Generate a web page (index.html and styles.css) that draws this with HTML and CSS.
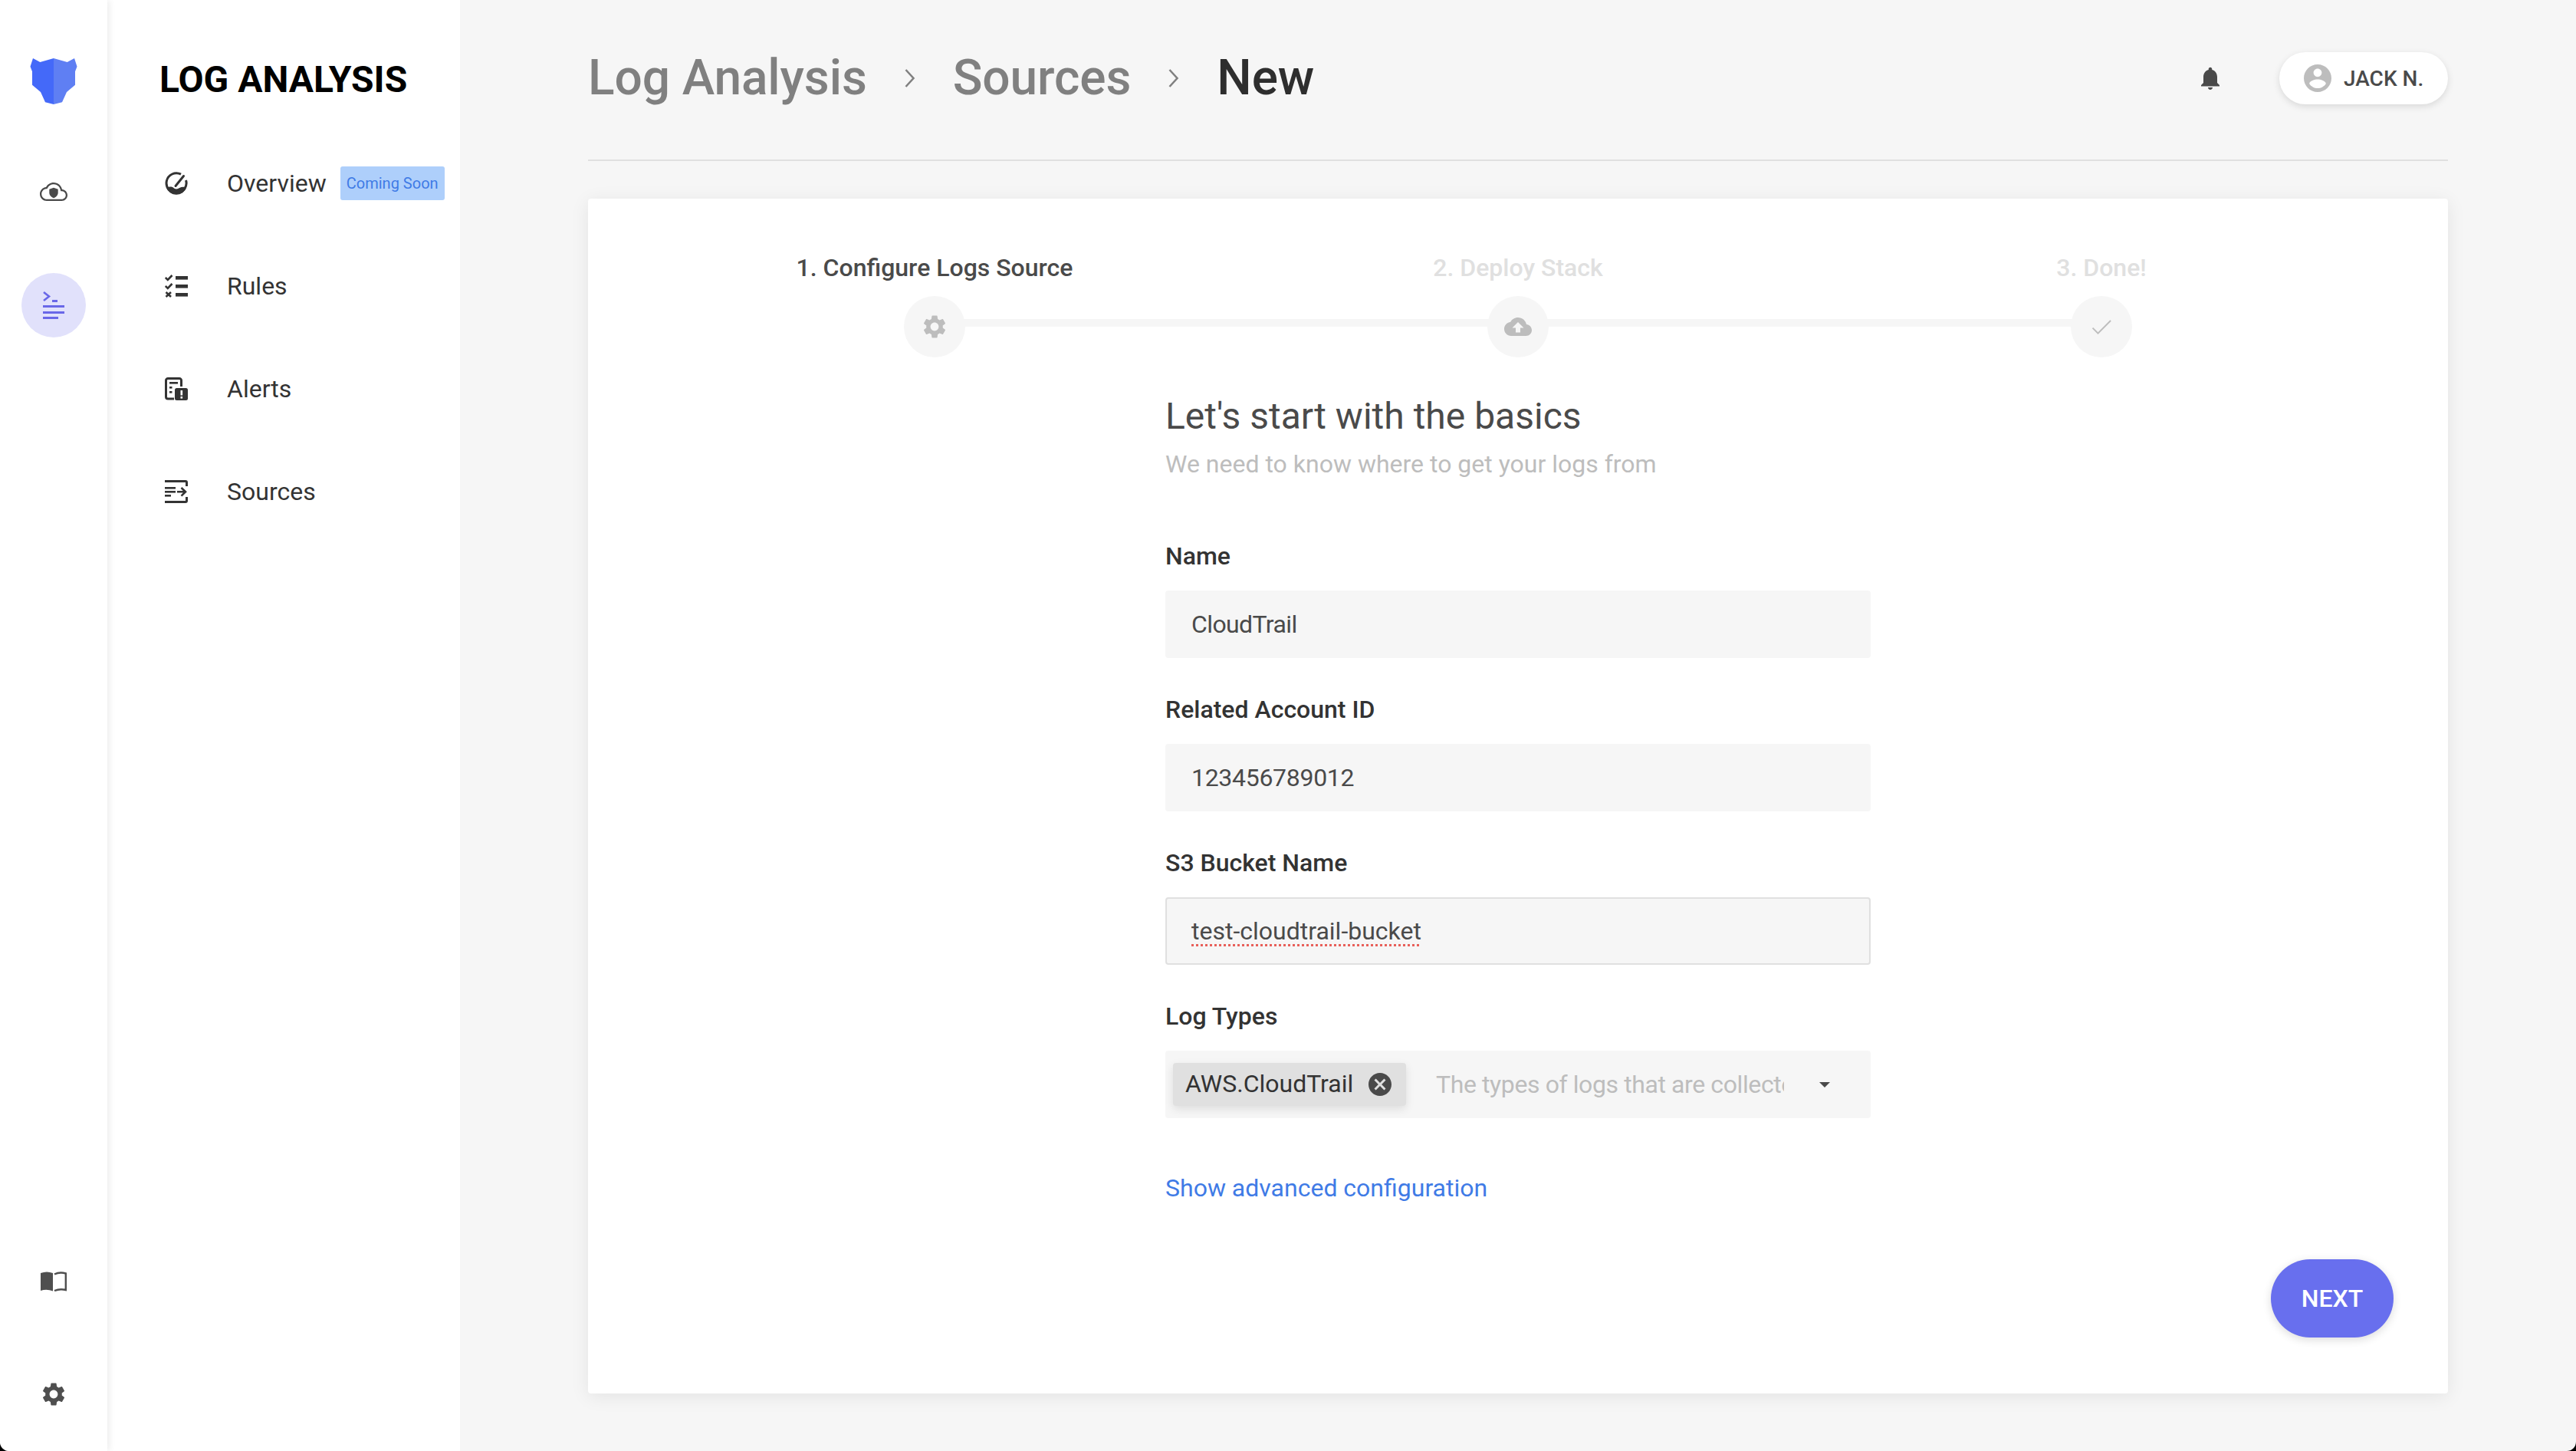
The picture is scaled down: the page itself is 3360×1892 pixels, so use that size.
FILE: index.html
```html
<!DOCTYPE html>
<html lang="en">
<head>
<meta charset="utf-8">
<title>Log Analysis - New Source</title>
<link rel="stylesheet" href="styles.css">
</head>
<body>
<div class="app">
  <aside class="rail">
    <div class="rail-btn rail-logo">
      <svg class="logo" viewBox="0 0 82 60"><path fill="#4469f9" d="M41 0 L23.3 5 L14 0 L10.500 10.700 L13 17.300 L13 34.700 L24 44 L30 57.300 L41 60 Z"/><path fill="#5f7ff3" d="M41 0 L58.700 5 L68 0 L71.500 10.700 L69 17.300 L69 34.700 L58 44 L52 57.300 L41 60 Z"/></svg>
    </div>
    <div class="rail-btn rail-cloud">
      <svg class="i36" viewBox="0 0 24 24"><path fill="#4a4a4a" d="M19.350 10.040C18.670 6.590 15.640 4 12 4 9.110 4 6.600 5.640 5.350 8.040 2.340 8.360 0 10.910 0 14c0 3.310 2.690 6 6 6h13c2.760 0 5-2.240 5-5 0-2.640-2.050-4.780-4.650-4.960zM19 18.500H6c-2.480 0-4.500-2.020-4.500-4.500 0-2.300 1.720-4.220 4-4.460l.8-.08.37-.71C7.820 6.500 9.800 5.500 12 5.500c2.860 0 5.340 2.030 5.900 4.830l.22 1.130 1.150.08c1.800.12 3.230 1.640 3.230 3.460 0 1.930-1.570 3.500-3.500 3.500z"/><path fill="#4a4a4a" d="M12 8.500l3.800 1.400v3c0 2.200-1.600 3.800-3.800 4.600-2.200-.8-3.800-2.400-3.800-4.600v-3z"/></svg>
    </div>
    <div class="rail-btn rail-active">
      <svg class="i-logs" viewBox="0 0 28 37"><path fill="none" stroke="#6967e8" stroke-width="2.600" d="M1 1l7 5.500-7 5.500"/><rect fill="#6967e8" x="12" y="11" width="7" height="3"/><rect fill="#6967e8" y="18" width="28" height="3"/><rect fill="#6967e8" y="26" width="28" height="3"/><rect fill="#6967e8" y="33" width="20" height="3"/></svg>
    </div>
    <div class="rail-spacer"></div>
    <div class="rail-btn rail-book">
      <svg class="i-book" viewBox="0 0 34 26"><path fill="#4f4f4f" d="M0 2 Q8 -1 16 2 V25.500 Q8 22.500 0 25 Z"/><path fill="none" stroke="#4f4f4f" stroke-width="2.400" d="M18 3.500 Q25 0 32.800 2.500 V24 Q25 22 18 25"/></svg>
    </div>
    <div class="rail-btn">
      <svg class="i36" viewBox="0 0 24 24"><path fill="#4f4f4f" d="M19.140 12.940c.04-.3.060-.61.060-.94 0-.32-.02-.64-.07-.94l2.030-1.580c.18-.14.23-.41.120-.61l-1.920-3.320c-.12-.22-.37-.29-.59-.22l-2.390.96c-.5-.38-1.030-.7-1.620-.94L14.400 2.810c-.04-.24-.24-.41-.48-.41h-3.840c-.24 0-.43.17-.47.41L9.250 5.350c-.59.24-1.130.57-1.620.94l-2.390-.96c-.22-.08-.47 0-.59.22L2.740 8.870c-.12.21-.08.47.120.61l2.030 1.580c-.05.3-.09.63-.09.94s.02.64.07.94l-2.030 1.580c-.18.14-.23.41-.12.61l1.920 3.320c.12.22.37.29.59.22l2.390-.96c.5.38 1.030.7 1.620.94l.36 2.540c.05.24.24.41.48.41h3.840c.24 0 .44-.17.47-.41l.36-2.540c.59-.24 1.130-.56 1.620-.94l2.390.96c.22.08.47 0 .59-.22l1.920-3.320c.12-.22.07-.47-.12-.61l-2.010-1.580zM12 15.600c-1.980 0-3.600-1.620-3.600-3.600s1.620-3.600 3.600-3.600 3.600 1.620 3.600 3.600-1.620 3.600-3.600 3.600z"/></svg>
    </div>
  </aside>

  <nav class="nav">
    <h2 class="nav-title">LOG ANALYSIS</h2>
    <div class="nav-item">
      <svg class="i30" viewBox="0 0 30 30"><path fill="none" stroke="#333" stroke-width="3" d="M21 3.200A13 13 0 1 0 27.500 11"/><path fill="#333" d="M1.800 20.500C6 19 10 19 12 21.500c2.500 1.500 5 1 7-.5 3-1.500 6-1.500 9.200-.5A14 14 0 0 1 1.800 20.500z"/><path stroke="#333" stroke-width="3" stroke-linecap="round" d="M14 18.500L24.500 5.500"/></svg>
      <span class="nav-label">Overview</span>
      <span class="badge">Coming Soon</span>
    </div>
    <div class="nav-item">
      <svg class="i30" viewBox="0 0 30 30"><path fill="none" stroke="#333" stroke-width="2.600" d="M.8 4l3 3L9.500 1M.8 15l3 3 5.700-6M1.500 23l6.500 6M8 23l-6.500 6"/><rect fill="#333" x="14" y="2" width="16" height="4.600"/><rect fill="#333" x="14" y="13" width="16" height="4.600"/><rect fill="#333" x="14" y="24" width="16" height="4.600"/></svg>
      <span class="nav-label">Rules</span>
    </div>
    <div class="nav-item">
      <svg class="i30" viewBox="0 0 30 30"><path fill="none" stroke="#333" stroke-width="3" d="M12 28H4a2.500 2.500 0 0 1-2.500-2.500V4A2.500 2.500 0 0 1 4 1.500h15A2.500 2.500 0 0 1 21.500 4v8"/><rect fill="#333" x="6" y="6" width="11" height="2.600"/><rect fill="#333" x="6" y="12" width="3.500" height="2.600"/><rect fill="#333" x="6" y="18" width="3.500" height="2.600"/><rect fill="#333" x="13" y="14" width="17" height="16" rx="2.500"/><rect fill="#fff" x="20.500" y="17" width="2.600" height="6.500"/><rect fill="#fff" x="20.500" y="25" width="2.600" height="2.600"/></svg>
      <span class="nav-label">Alerts</span>
    </div>
    <div class="nav-item">
      <svg class="i30" viewBox="0 0 30 30"><path fill="none" stroke="#333" stroke-width="3" d="M0 1.500h27a1.500 1.500 0 0 1 1.500 1.500v5M0 28.500h27a1.500 1.500 0 0 0 1.500-1.500v-5"/><rect fill="#333" y="9" width="14" height="2.600"/><rect fill="#333" y="14" width="14" height="2.600"/><rect fill="#333" y="19" width="8" height="2.600"/><path fill="none" stroke="#333" stroke-width="2.600" d="M16 15.300h11M21.500 10l5.500 5.300-5.500 5.300"/></svg>
      <span class="nav-label">Sources</span>
    </div>
  </nav>

  <main class="main">
    <header class="topbar">
      <div class="crumbs">
        <span class="crumb">Log Analysis</span>
        <svg class="chev" viewBox="0 0 14 24"><path fill="none" stroke="#808080" stroke-width="2.600" d="M1.500 1l10 11-10 11"/></svg>
        <span class="crumb">Sources</span>
        <svg class="chev" viewBox="0 0 14 24"><path fill="none" stroke="#808080" stroke-width="2.600" d="M1.500 1l10 11-10 11"/></svg>
        <span class="crumb crumb-current">New</span>
      </div>
      <div class="top-right">
        <svg class="bell" viewBox="0 0 24 24"><path fill="#4a4a4a" d="M12 22c1.100 0 2-.9 2-2h-4c0 1.100.89 2 2 2zm6-6v-5c0-3.070-1.640-5.640-4.500-6.320V4c0-.83-.67-1.500-1.500-1.500s-1.500.67-1.500 1.500v.68C7.630 5.360 6 7.920 6 11v5l-2 2v1h16v-1l-2-2z"/></svg>
        <div class="user">
          <svg class="avatar" viewBox="2 2 20 20"><path fill="#bdbdbd" d="M12 2C6.480 2 2 6.480 2 12s4.480 10 10 10 10-4.480 10-10S17.520 2 12 2zm0 3c1.660 0 3 1.340 3 3s-1.340 3-3 3-3-1.340-3-3 1.340-3 3-3zm0 14.200c-2.500 0-4.710-1.280-6-3.220.03-1.990 4-3.080 6-3.080 1.990 0 5.970 1.090 6 3.080-1.290 1.940-3.500 3.220-6 3.220z"/></svg>
          <span>JACK N.</span>
        </div>
      </div>
    </header>

    <section class="card">
      <div class="stepper">
        <div class="step">
          <div class="step-label step-label-active">1. Configure Logs Source</div>
          <div class="step-dot">
            <svg class="i36" viewBox="0 0 24 24"><path fill="#bdbdbd" d="M19.140 12.940c.04-.3.060-.61.060-.94 0-.32-.02-.64-.07-.94l2.030-1.580c.18-.14.23-.41.120-.61l-1.920-3.320c-.12-.22-.37-.29-.59-.22l-2.390.96c-.5-.38-1.030-.7-1.620-.94L14.400 2.810c-.04-.24-.24-.41-.48-.41h-3.840c-.24 0-.43.17-.47.41L9.250 5.350c-.59.24-1.130.57-1.620.94l-2.390-.96c-.22-.08-.47 0-.59.22L2.740 8.870c-.12.21-.08.47.120.61l2.030 1.580c-.05.3-.09.63-.09.94s.02.64.07.94l-2.030 1.580c-.18.14-.23.41-.12.61l1.920 3.320c.12.22.37.29.59.22l2.390-.96c.5.38 1.030.7 1.620.94l.36 2.540c.05.24.24.41.48.41h3.840c.24 0 .44-.17.47-.41l.36-2.540c.59-.24 1.130-.56 1.620-.94l2.390.96c.22.08.47 0 .59-.22l1.920-3.320c.12-.22.07-.47-.12-.61l-2.010-1.580zM12 15.600c-1.980 0-3.600-1.620-3.600-3.600s1.620-3.600 3.600-3.600 3.600 1.620 3.600 3.600-1.620 3.600-3.600 3.600z"/></svg>
          </div>
        </div>
        <div class="step step-linked">
          <div class="step-label">2. Deploy Stack</div>
          <div class="step-dot">
            <svg class="i36" viewBox="0 0 24 24"><path fill="#bdbdbd" d="M19.350 10.040C18.670 6.590 15.640 4 12 4 9.110 4 6.600 5.640 5.350 8.040 2.340 8.360 0 10.910 0 14c0 3.310 2.690 6 6 6h13c2.760 0 5-2.240 5-5 0-2.640-2.050-4.780-4.650-4.960zM14 13v4h-4v-4H7l5-5 5 5h-3z"/></svg>
          </div>
        </div>
        <div class="step step-linked">
          <div class="step-label">3. Done!</div>
          <div class="step-dot">
            <svg class="i36" viewBox="0 0 24 24"><path fill="#bdbdbd" d="M9 16.800L4.800 12.600l-.9.900L9 18.600 20.500 7.100l-.9-.9z"/></svg>
          </div>
        </div>
      </div>

      <form class="form">
        <h3 class="form-title">Let's start with the basics</h3>
        <p class="form-sub">We need to know where to get your logs from</p>
        <div class="fields">
          <div class="field">
            <div class="field-label">Name</div>
            <div class="input input-name">CloudTrail</div>
          </div>
          <div class="field">
            <div class="field-label">Related Account ID</div>
            <div class="input input-digits">123456789012</div>
          </div>
          <div class="field">
            <div class="field-label">S3 Bucket Name</div>
            <div class="input input-focus"><span class="misspelled">test-cloudtrail-bucket</span></div>
          </div>
          <div class="field">
            <div class="field-label">Log Types</div>
            <div class="input input-multi">
              <span class="chip">
                <span class="chip-text">AWS.CloudTrail</span>
                <svg class="chip-x" viewBox="2 2 20 20"><path fill="#4a4a4a" d="M12 2C6.470 2 2 6.470 2 12s4.470 10 10 10 10-4.470 10-10S17.530 2 12 2zm5 13.590L15.590 17 12 13.410 8.410 17 7 15.590 10.590 12 7 8.410 8.410 7 12 10.590 15.590 7 17 8.410 13.410 12 17 15.590z"/></svg>
              </span>
              <span class="placeholder">The types of logs that are collected</span>
              <svg class="caret" viewBox="7 10 10 5"><path fill="#4a4a4a" d="M7 10l5 5 5-5z"/></svg>
            </div>
          </div>
        </div>
        <a class="advanced">Show advanced configuration</a>
      </form>

      <div class="card-foot">
        <button class="next" type="button">NEXT</button>
      </div>
    </section>
  </main>
</div>
</body>
</html>
```

FILE: styles.css
```css
* { box-sizing: border-box; }
html, body { margin: 0; height: 100%; background: #000; }
body { font-family: Roboto, "Liberation Sans", sans-serif; color: #333; overflow: hidden; }
svg { display: block; flex: none; }

.app {
  display: flex;
  width: 3360px;
  height: 1892px;
  background: #f6f6f6;
  border-radius: 0 0 12px 12px;
  overflow: hidden;
}

/* icon rail */
.rail {
  width: 140px;
  flex: none;
  background: #fff;
  display: flex;
  flex-direction: column;
  align-items: center;
  padding: 64px 0 32px;
  box-shadow: 3px 0 8px rgba(0, 0, 0, .07);
  position: relative;
  z-index: 2;
}
.rail-btn { width: 84px; height: 84px; flex: none; border-radius: 50%; display: flex; align-items: center; justify-content: center; }
.rail-logo { margin-bottom: 60px; }
.rail-cloud { margin-bottom: 64px; }
.rail-active { background: #e1e1fb; }
.rail-spacer { flex: 1; }
.rail-book { margin-bottom: 63px; }
.logo { width: 82px; height: 60px; }
.i36 { width: 36px; height: 36px; }
.i30 { width: 30px; height: 30px; }
.i-logs { width: 28px; height: 37px; }
.i-book { width: 34px; height: 26px; }

/* section nav */
.nav { width: 460px; flex: none; background: #fff; padding-left: 71px; }
.nav-title {
  margin: 0 0 0 -3px;
  height: 172px;
  padding-top: 74px;
  font-size: 48px;
  line-height: 60px;
  font-weight: 700;
  color: #000;
  white-space: nowrap;
}
.nav-item { height: 134px; padding-left: 4px; display: flex; align-items: center; }
.nav-label { margin-left: 51px; font-size: 32px; color: #333; }
.badge {
  margin-left: 18px;
  width: 136px;
  height: 44px;
  background: #aecffb;
  color: #3f7be6;
  border-radius: 3px;
  font-size: 20px;
  display: flex;
  align-items: center;
  justify-content: center;
  white-space: nowrap;
}

/* main column */
.main { flex: 1; min-width: 0; padding: 0 167px; display: flex; flex-direction: column; }
.topbar {
  height: 210px;
  flex: none;
  padding-bottom: 4px;
  border-bottom: 2px solid #e0e0e0;
  display: flex;
  align-items: center;
  justify-content: space-between;
}
.crumbs { display: flex; align-items: center; }
.crumb { font-size: 64px; font-weight: 500; color: #808080; line-height: 76px; letter-spacing: -.1px; }
.crumb-current { color: #2e2e2e; }
.chev { width: 14px; height: 24px; margin: 0 49px; }
.top-right { display: flex; align-items: center; }
.bell { width: 36px; height: 36px; margin-right: 72px; }
.user {
  width: 220px;
  height: 68px;
  background: #fff;
  border-radius: 34px;
  box-shadow: 0 3px 10px rgba(0, 0, 0, .12);
  display: flex;
  align-items: center;
  padding-left: 32px;
  font-size: 28px;
  font-weight: 500;
  color: #4a4a4a;
}
.avatar { width: 36px; height: 36px; margin-right: 16px; }

/* card */
.card {
  margin-top: 49px;
  height: 1558px;
  flex: none;
  background: #fff;
  border-radius: 4px;
  box-shadow: 0 4px 24px rgba(0, 0, 0, .08);
  padding-top: 71px;
  display: flex;
  flex-direction: column;
}
.stepper { display: grid; grid-template-columns: repeat(3, 761px); justify-content: center; }
.step { position: relative; display: flex; flex-direction: column; align-items: center; }
.step-linked::before {
  content: "";
  position: absolute;
  top: 86px;
  left: -50%;
  width: 100%;
  height: 10px;
  background: #f6f6f6;
}
.step-label { height: 38px; line-height: 38px; font-size: 32px; font-weight: 500; color: #e0e0e0; white-space: nowrap; }
.step-label-active { color: #4a4a4a; }
.step-dot {
  margin-top: 18px;
  width: 80px;
  height: 80px;
  border-radius: 50%;
  background: #f6f6f6;
  display: flex;
  align-items: center;
  justify-content: center;
  position: relative;
  z-index: 1;
}

/* form */
.form { width: 920px; margin: 49px auto 0; display: flex; flex-direction: column; align-items: flex-start; }
.form-title { margin: 0; font-size: 48px; line-height: 56px; font-weight: 400; color: #4a4a4a; }
.form-sub { margin: 15px 0 0; font-size: 32px; line-height: 38px; color: #bdbdbd; }
.fields { width: 100%; margin-top: 82px; display: flex; flex-direction: column; gap: 48px; }
.field-label { font-size: 32px; line-height: 38px; font-weight: 500; color: #333; margin-bottom: 26px; }
.input {
  height: 88px;
  background: #f6f6f6;
  border-radius: 4px;
  padding: 0 34px;
  display: flex;
  align-items: center;
  font-size: 32px;
  color: #4a4a4a;
}
.input-name { letter-spacing: -.6px; }
.input-digits { letter-spacing: -.3px; }
.input-focus { border: 2px solid #e0e0e0; padding: 0 32px; }
.misspelled { text-decoration: underline dotted #e8605a 3px; text-underline-offset: 6px; }
.input-multi { padding: 0 0 0 10px; }
.chip {
  width: 304px;
  height: 56px;
  flex: none;
  background: #e0e0e0;
  border-radius: 4px;
  box-shadow: 0 4px 12px rgba(0, 0, 0, .1);
  padding: 0 19px 0 16px;
  color: #333;
  display: flex;
  align-items: center;
  justify-content: space-between;
}
.chip-text { margin-bottom: 2px; }
.chip-x { width: 30px; height: 30px; }
.placeholder { margin-left: 39px; width: 454px; flex: none; overflow: hidden; white-space: nowrap; color: #bdbdbd; letter-spacing: -.4px; }
.caret { width: 14px; height: 7px; margin-left: 46px; }
.advanced { margin-top: 72px; font-size: 32px; line-height: 38px; color: #3f7be6; }

.card-foot { margin-top: auto; padding: 0 71px 73px 0; display: flex; justify-content: flex-end; }
.next {
  width: 160px;
  height: 102px;
  border: 0;
  border-radius: 51px;
  background: #686fee;
  color: #fff;
  font: 500 32px Roboto, "Liberation Sans", sans-serif;
  box-shadow: 0 3px 12px rgba(0, 0, 0, .14);
}
```
